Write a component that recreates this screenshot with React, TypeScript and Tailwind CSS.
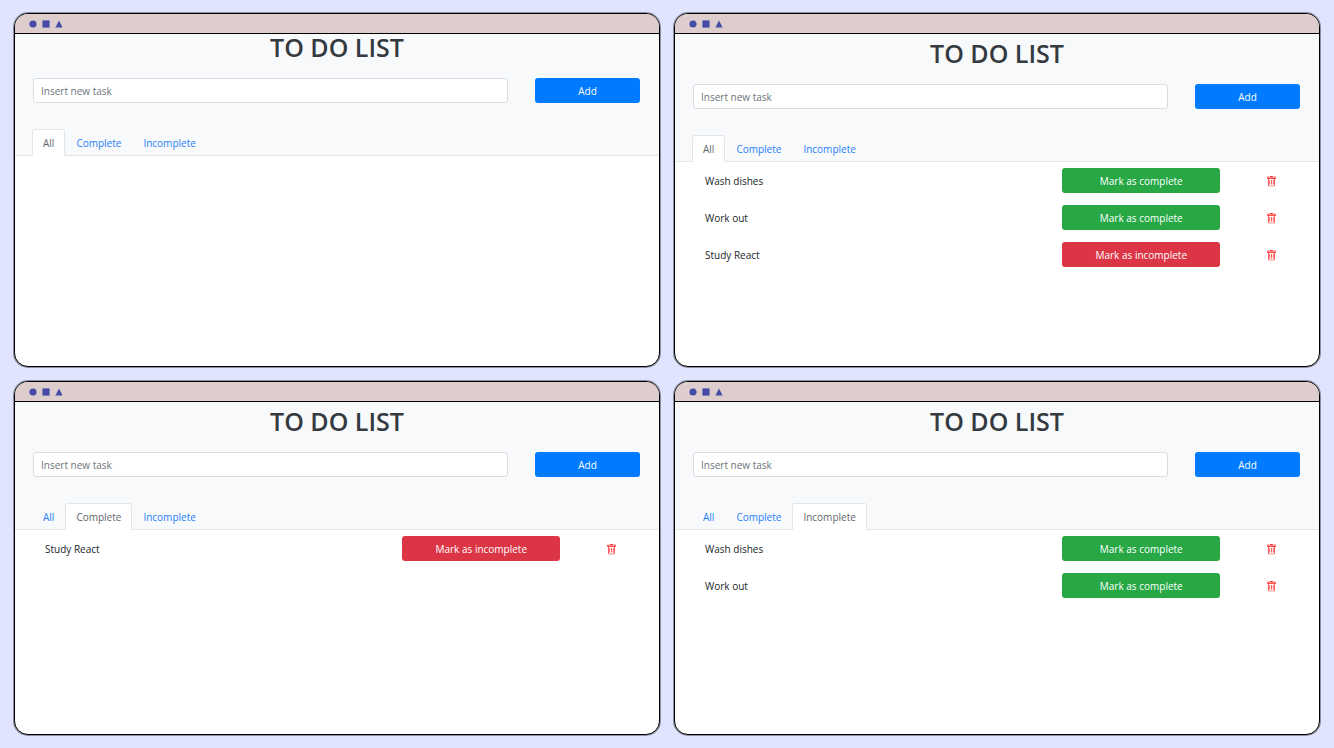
import { useState } from "react";
import { BsTrash } from "react-icons/bs";

type Filter = "All" | "Complete" | "Incomplete";
type Task = { name: string; done: boolean };

const FILTERS: Filter[] = ["All", "Complete", "Incomplete"];

const TASKS: Task[] = [
  { name: "Wash dishes", done: false },
  { name: "Work out", done: false },
  { name: "Study React", done: true },
];

function TitleBar() {
  return (
    <div className="flex h-[20px] items-center border-b border-black bg-[#decdcd] pl-[14px] shadow-[0_1px_0_#8a8a8e]">
      <svg width="36" height="10" viewBox="0 0 36 10" fill="#464ca6" aria-hidden="true">
        <circle cx="4" cy="5" r="3.6" />
        <rect x="13.4" y="1.4" width="7.2" height="7.2" />
        <path d="M30 1.4 33.6 8.6H26.4Z" />
      </svg>
    </div>
  );
}

function TaskRow({ task, onToggle, onRemove }: { task: Task; onToggle: () => void; onRemove: () => void }) {
  return (
    <li className="grid grid-cols-[358fr_158fr_99fr] items-center pl-[30px]">
      <span className="text-[#212529]">{task.name}</span>
      <button
        type="button"
        onClick={onToggle}
        className={
          task.done
            ? "h-[25px] rounded-[3px] bg-[#dc3545] text-white"
            : "h-[25px] rounded-[3px] bg-[#28a745] text-white"
        }
      >
        {task.done ? "Mark as incomplete" : "Mark as complete"}
      </button>
      <button type="button" aria-label={`Delete ${task.name}`} onClick={onRemove} className="justify-self-center pt-px pl-1 text-[#ff1a1a]">
        <BsTrash size={11} />
      </button>
    </li>
  );
}

function TodoWindow({ initialFilter, initialTasks, compact = false }: { initialFilter: Filter; initialTasks: Task[]; compact?: boolean }) {
  const [filter, setFilter] = useState<Filter>(initialFilter);
  const [tasks, setTasks] = useState<Task[]>(initialTasks);
  const [draft, setDraft] = useState("");

  const visible = tasks.filter((t) => filter === "All" || t.done === (filter === "Complete"));

  return (
    <section className="flex flex-col overflow-hidden rounded-[14px] border border-black bg-white shadow-[0_0_0_1px_#8c8fa0]">
      <TitleBar />
      <header className={compact ? "border-b border-[#e3e6e9] bg-[#f8f9fb]" : "border-b border-[#e3e6e9] bg-[#f8f9fb] pt-[6px]"}>
        <h1 className="text-center text-[25px] leading-[26px] font-semibold text-[#343a40]">TO DO LIST</h1>
        <form
          className="mt-[18px] grid grid-cols-[476fr_105fr] gap-[27px] pr-[19px] pl-[18px]"
          onSubmit={(e) => {
            e.preventDefault();
            if (draft.trim()) setTasks([...tasks, { name: draft.trim(), done: false }]);
            setDraft("");
          }}
        >
          <input
            aria-label="Insert new task"
            value={draft}
            onChange={(e) => setDraft(e.target.value)}
            placeholder="Insert new task"
            className="h-[25px] min-w-0 rounded-[3px] border border-[#d9dde2] bg-white px-[7px] text-[#495057] outline-none placeholder:text-[#6c757d]"
          />
          <button type="submit" className="h-[25px] rounded-[3px] bg-[#007bff] text-white">
            Add
          </button>
        </form>
        <div className="mt-[26px] -mb-px flex pl-[17px]" role="tablist">
          {FILTERS.map((f) => (
            <button
              key={f}
              type="button"
              role="tab"
              aria-selected={f === filter}
              onClick={() => setFilter(f)}
              className={
                f === filter
                  ? "h-[27px] rounded-t-[3px] border border-[#e3e6e9] border-b-white bg-white px-[10px] text-[#5f666d]"
                  : "h-[27px] rounded-t-[3px] border border-transparent px-[10px] text-[#1f80fa]"
              }
            >
              {f}
            </button>
          ))}
        </div>
      </header>
      <ul className="flex flex-col gap-3 pt-[6px]">
        {visible.map((task) => (
          <TaskRow
            key={task.name}
            task={task}
            onToggle={() => setTasks(tasks.map((t) => (t === task ? { ...t, done: !t.done } : t)))}
            onRemove={() => setTasks(tasks.filter((t) => t !== task))}
          />
        ))}
      </ul>
    </section>
  );
}

export default function App() {
  return (
    <main className="grid min-h-screen grid-cols-2 grid-rows-2 gap-[14px] bg-[#e0e4ff] pt-[13px] pr-[14px] pb-[13px] pl-[14px] font-['Open_Sans','Noto_Sans',sans-serif] text-[10px] leading-4">
      <TodoWindow initialFilter="All" initialTasks={[]} compact />
      <TodoWindow initialFilter="All" initialTasks={TASKS} />
      <TodoWindow initialFilter="Complete" initialTasks={TASKS} />
      <TodoWindow initialFilter="Incomplete" initialTasks={TASKS} />
    </main>
  );
}
